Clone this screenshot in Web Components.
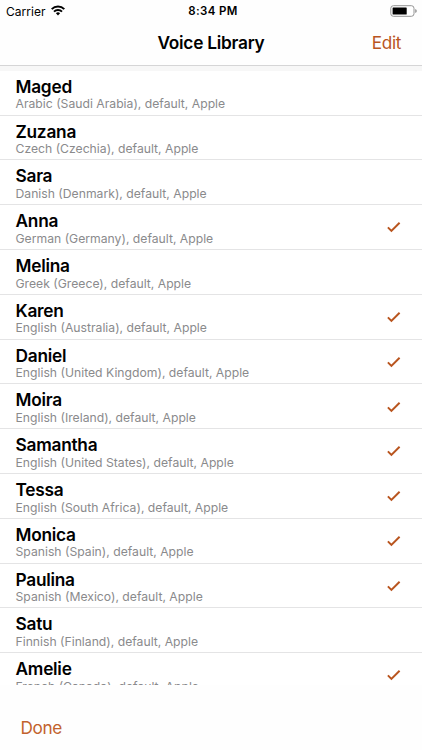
<!DOCTYPE html>
<html lang="en">
<head>
<meta charset="utf-8">
<title>Voice Library</title>
<style>
  html, body { margin: 0; height: 100%; overflow: hidden; }
  body {
    --accent: #b9551f;
    --separator: #e4e4e5;
    --bar: #fefefe;
    background: #fff;
    color: #000;
    font-family: Inter, "Liberation Sans", sans-serif;
  }
</style>
</head>
<body>
<voice-app></voice-app>
<script>
(function () {
  const define = (name, html, setup) => {
    const template = document.createElement('template');
    template.innerHTML = html;
    customElements.define(name, class extends HTMLElement {
      constructor() {
        super();
        this.attachShadow({ mode: 'open' });
        this.shadowRoot.appendChild(template.content.cloneNode(true));
      }

      connectedCallback() {
        if (setup) setup(this.shadowRoot);
      }
    });
  };

  define('status-bar', `
    <style>
      :host {
        display: grid;
        grid-template-columns: 1fr auto 1fr;
        align-items: center;
        height: 21px;
        padding: 0 4px 0 6px;
        font-size: 12px;
        line-height: 21px;
      }
      .left { display: flex; align-items: center; gap: 5px; }
      .left span { letter-spacing: 0.05px; }
      .left svg { margin-top: -1px; }
      .time { font-weight: 600; font-size: 11.5px; letter-spacing: 0.4px; padding: 1px 0 0 2px; }
      .battery { justify-self: end; margin-top: -1px; }
      svg { display: block; }
    </style>
    <div class="left">
      <span>Carrier</span>
      <svg width="14" height="11" viewBox="0 0 14 11">
        <g fill="none" stroke="#000" stroke-width="2">
          <path d="M.7 4.1a8.9 8.9 0 0 1 12.6 0"/>
          <path d="M3 6.6a5.65 5.65 0 0 1 8 0"/>
        </g>
        <path d="M4.9 8.3a3 3 0 0 1 4.2 0L7 10.5z"/>
      </svg>
    </div>
    <span class="time">8:34 PM</span>
    <svg class="battery" width="28" height="12" viewBox="0 0 28 12">
      <rect x=".8" y=".7" width="23.2" height="10.6" rx="2.6" fill="#fff" stroke="#949494"/>
      <rect x="2.6" y="2.4" width="14.1" height="7.2" rx=".6"/>
      <path d="M25.2 4q1.6.5 1.6 2t-1.6 2z" fill="#949494"/>
    </svg>
  `);

  define('bar-button', `
    <style>
      :host { display: inline-block; }
      button {
        display: block;
        margin: 0;
        padding: 0;
        border: 0;
        background: none;
        color: var(--accent);
        font: inherit;
        font-size: 17.2px;
        line-height: 24px;
        letter-spacing: -0.35px;
        cursor: pointer;
      }
    </style>
    <button><slot></slot></button>
  `);

  define('nav-bar', `
    <style>
      :host {
        display: grid;
        grid-template-columns: 1fr auto 1fr;
        align-items: center;
        height: 44px;
        padding: 0 21px;
      }
      h1 {
        grid-column: 2;
        margin: 0;
        font-size: 17.3px;
        font-weight: 600;
        line-height: 24px;
        letter-spacing: -0.25px;
      }
      slot[name="action"] { display: block; justify-self: end; }
    </style>
    <h1><slot></slot></h1>
    <slot name="action"></slot>
  `);

  define('check-mark', `
    <style>
      :host { display: block; width: 14px; height: 12px; padding-top: 0.8px; }
      svg { display: block; }
    </style>
    <svg width="14" height="12" viewBox="0 0 14 12">
      <path d="M.9 6.4 4.4 9.9 12.6 1.7" fill="none" stroke="var(--accent)" stroke-width="2"/>
    </svg>
  `);

  define('voice-row', `
    <style>
      :host {
        display: flex;
        align-items: center;
        justify-content: space-between;
        box-sizing: border-box;
        height: 44.8px;
        padding: 0 21px 0 15.5px;
        border-bottom: 1px solid var(--separator);
      }
      .name {
        padding-top: 2.8px;
        font-size: 17.3px;
        font-weight: 600;
        line-height: 20px;
        letter-spacing: -0.25px;
      }
      .detail {
        margin-top: -0.5px;
        color: #8a8a8c;
        font-size: 12.2px;
        line-height: 15px;
        white-space: nowrap;
      }
      check-mark { display: none; }
      :host([selected]) check-mark { display: block; }
    </style>
    <div>
      <div class="name"><slot name="name"></slot></div>
      <div class="detail"><slot></slot></div>
    </div>
    <check-mark></check-mark>
  `);

  const voices = [
    ['Maged', 'Arabic (Saudi Arabia)', false],
    ['Zuzana', 'Czech (Czechia)', false],
    ['Sara', 'Danish (Denmark)', false],
    ['Anna', 'German (Germany)', true],
    ['Melina', 'Greek (Greece)', false],
    ['Karen', 'English (Australia)', true],
    ['Daniel', 'English (United Kingdom)', true],
    ['Moira', 'English (Ireland)', true],
    ['Samantha', 'English (United States)', true],
    ['Tessa', 'English (South Africa)', true],
    ['Monica', 'Spanish (Spain)', true],
    ['Paulina', 'Spanish (Mexico)', true],
    ['Satu', 'Finnish (Finland)', false],
    ['Amelie', 'French (Canada)', true]
  ];

  define('voice-list', `
    <style>
      :host { display: block; overflow: hidden; background: #fff; }
      .gap { height: 4.8px; background: #f7f7f7; }
    </style>
    <div class="gap"></div>
    <div class="rows"></div>
  `, (root) => {
    root.querySelector('.rows').innerHTML = voices.map(([name, language, selected]) => `
      <voice-row${selected ? ' selected' : ''}><span slot="name">${name}</span>${language}, default, Apple</voice-row>
    `).join('');
  });

  define('voice-app', `
    <style>
      :host { display: flex; flex-direction: column; height: 750px; }
      header { flex: none; box-sizing: border-box; height: 66px; background: var(--bar); border-bottom: 1px solid #d5d5d6; }
      voice-list { flex: 1; min-height: 0; }
      footer {
        --accent: #c2622d;
        display: flex;
        align-items: center;
        flex: none;
        box-sizing: border-box;
        height: 65px;
        padding: 20px 20.5px 0;
        background: var(--bar);
      }
    </style>
    <header>
      <status-bar></status-bar>
      <nav-bar>Voice Library<bar-button slot="action">Edit</bar-button></nav-bar>
    </header>
    <voice-list></voice-list>
    <footer><bar-button>Done</bar-button></footer>
  `);
})();
</script>
</body>
</html>
